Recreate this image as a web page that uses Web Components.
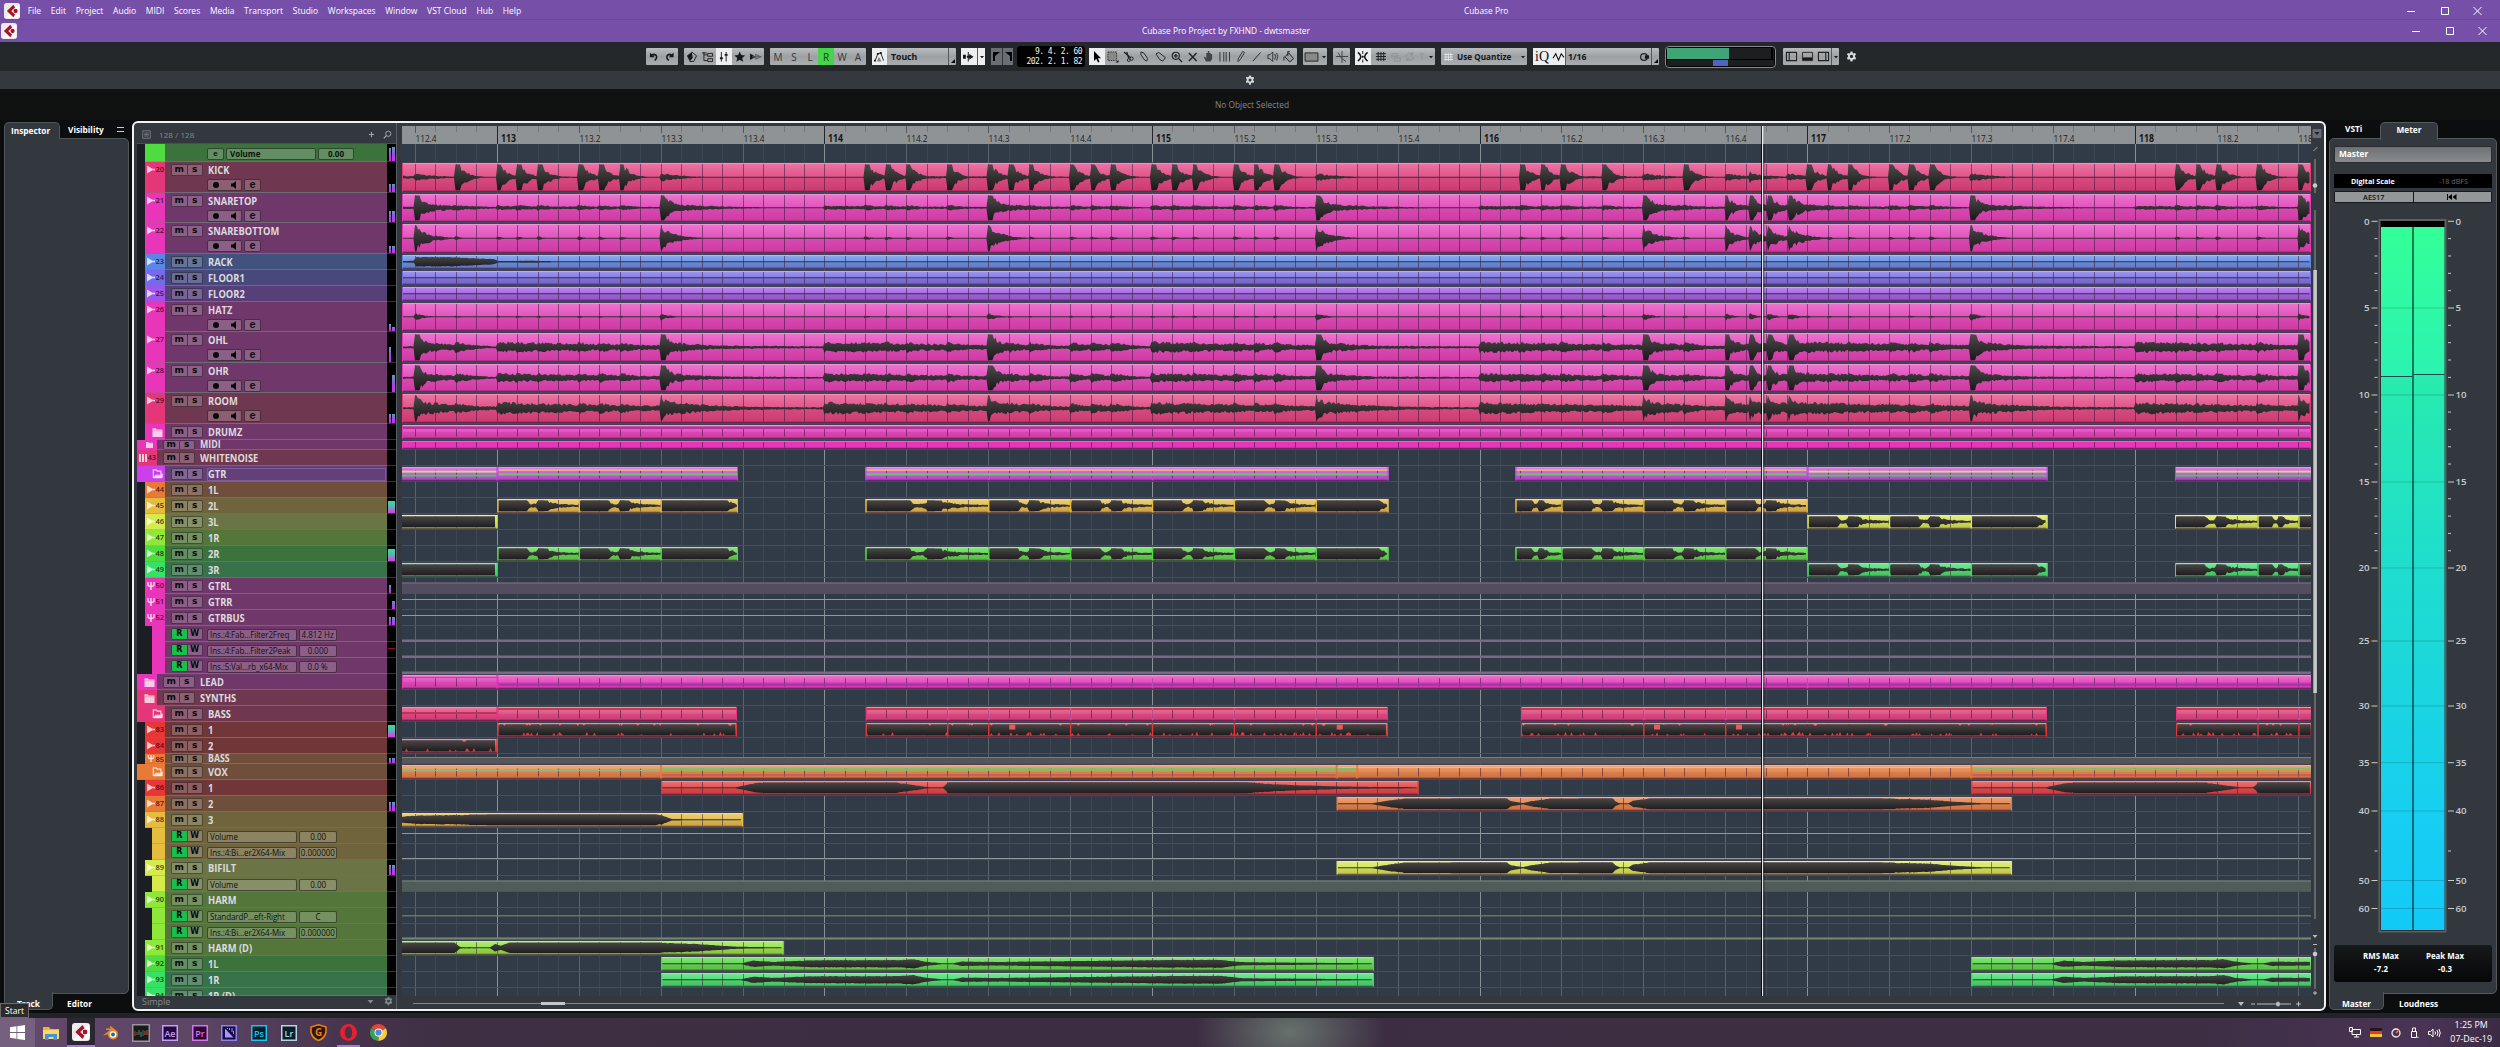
<!DOCTYPE html>
<html lang="en">
<head>
<meta charset="utf-8">
<title>Cubase Pro Project by FXHND - dwtsmaster</title>
<style>
    html, body { margin: 0; padding: 0; }
    body {
        width: 2500px;
        height: 1047px;
        overflow: hidden;
        background: #0c0d0e;
        font-family: "Open Sans", "Noto Sans", sans-serif;
        font-size: 9px;
        line-height: 1;
        color: #fff;
    }
    main {
        display: flex;
        align-items: flex-start;
        height: 898px;
        padding: 1px 0 0 4px;
        box-sizing: border-box;
        background: linear-gradient(#0c0d0e 893px, #212427 893px);
    }
</style>
</head>
<body>
<daw-titlebar></daw-titlebar>
<daw-toolbar></daw-toolbar>
<info-line>No Object Selected</info-line>
<main>
    <inspector-panel></inspector-panel>
    <project-zone></project-zone>
    <meter-panel></meter-panel>
</main>
<task-bar></task-bar>

<script>
// ---------- shared data ----------
const BAR = 327.55;
const STEP = BAR / 16;
const BAR_113 = 497.4;
const LEFT = 402;
const RIGHT = 2311;
const PLAYHEAD = 1762;
const at = n => BAR_113 + n * STEP;

// strip colour, body colour
const C = {
    rose: ['#e6367a', '#703850'],
    pink: ['#e835ba', '#70386a'],
    blue: ['#5a86ea', '#42527e'],
    indigo: ['#756aec', '#48487c'],
    violet: ['#9d55ea', '#573f7a'],
    purple: ['#cb40ea', '#644078'],
    orange: ['#e87a38', '#704e3c'],
    yellow: ['#e6bc3e', '#70643c'],
    lemon: ['#d6ea4a', '#6a7444'],
    lime: ['#8ee838', '#54763a'],
    green: ['#4edc3e', '#3c723c'],
    mint: ['#36e264', '#38724a'],
    red: ['#e63636', '#703638']
};

const hits = [-2, 0, 1, 2, 4, 5, 6, 18, 19, 20, 22, 24, 25, 26, 28, 29, 30, 32, 33, 34, 36, 37, 38,
    50, 51, 52, 54, 58, 64, 65, 66, 68, 69, 70, 82, 83, 84, 86, 88];
const snares = [-4, 8, 24, 40, 56, 60, 61.2, 62.1, 63.1, 72, 88];
const kickWave = hits.map(n => [n, 1.6, 8]).concat(
    [-4, 8, 40, 56, 60, 61.2, 63, 72].map(n => [n, .36, 22]), [[61.2, .5, 9]], [[-5, .16, 60], [0, .14, 90], [18, .16, 180], [50, .14, 150], [64, .12, 70], [82, .14, 80]]);
const big = (peak, decay) => snares.map(n => [n, peak, n > 59 && n < 63 ? decay * .75 : decay]);
const small = (peak, decay) => hits.map(n => [n, peak, decay]);
const beds = amp => [[-5, .1, 400], [0, amp, 190], [16, amp, 210], [32, amp, 190], [48, amp, 210], [64, amp, 190], [80, amp, 210]];

const full = (wave) => [{ a: LEFT, b: RIGHT, wave }];
const gtrSplits = [4, 8, 24, 28, 32, 36, 40, 52, 56, 60, 68, 72, 86, 88];
const bassSplits = [22, 24, 28, 32, 36, 40, 56, 60, 86, 88];
const gtrMain = [[at(0), 738], [865.5, 1388.5], [1515.5, at(64)]];
const gtrAlt = [[LEFT - 9, at(0)], [at(64), 2047.5], [2175, RIGHT + 9]];
const riff = ranges => ranges.map(([a, b]) => ({ a, b, riff: true, splits: gtrSplits }));

const voxA = [[0, .04], [73, .05], [95, .9], [108, .95], [235, .95], [262, .25], [268, .08], [282, .1], [287, 1], [585, 1], [610, .7], [640, .45], [690, .2], [757, .1]];
const voxB = [[0, .04], [35, .08], [55, .7], [68, .95], [170, 1], [174, .5], [186, .12], [195, .5], [212, .95], [276, 1], [279, .4], [283, .1], [292, .08], [296, .6], [313, 1], [540, 1], [590, .8], [620, .35], [650, .06], [675, .05]];
const harm = [[0, .04], [80, .08], [92, .6], [100, .5], [112, .35], [150, .65], [240, .7], [252, .9], [264, .4], [280, .1], [292, .08], [300, .4], [340, .35], [500, .7], [560, .75], [580, .3], [714, .08]];

const pinkCurve = [{ y: 13.5, h: 2.5, c: '#7c6884' }];
const TRACKS = [
    { first: true, c: 'green', h: 18, m: [13, 14] },
    { n: 20, name: 'KICK', c: 'rose', h: 31, m: [8, 8], clips: full(kickWave) },
    { n: 21, name: 'SNARETOP', c: 'pink', h: 30, m: [11, 11], clips: full(big(1.3, 12).concat(big(.45, 50), small(.26, 20), beds(.18))) },
    { n: 22, name: 'SNAREBOTTOM', c: 'pink', h: 31, m: [7, 7], clips: full(big(1, 14).concat(small(.16, 6))) },
    { n: 23, name: 'RACK', c: 'blue', h: 16, clips: [{ a: LEFT, b: RIGHT, pts: [[0, .15], [12, .2], [14, .9], [50, .85], [92, .5], [96, .12], [130, .2], [165, .04], [1909, .02]] }] },
    { n: 24, name: 'FLOOR1', c: 'indigo', h: 16, clips: full([]) },
    { n: 25, name: 'FLOOR2', c: 'violet', h: 16, clips: full([]) },
    { n: 26, name: 'HATZ', c: 'pink', h: 30, m: [7, 4], clips: full(big(.32, 9).concat(small(.1, 6))) },
    { n: 27, name: 'OHL', c: 'pink', h: 31, m: [15, 0], clips: full(big(1.5, 10).concat(big(.6, 42), small(.46, 24), beds(.48))) },
    { n: 28, name: 'OHR', c: 'pink', h: 30, m: [0, 17], clips: full(big(1.5, 10).concat(big(.55, 40), small(.44, 22), beds(.4))) },
    { n: 29, name: 'ROOM', c: 'rose', h: 31, m: [9, 9], clips: full(big(1, 14).concat(big(.65, 58), small(.46, 26), beds(.52))) },
    { name: 'DRUMZ', c: 'pink', h: 16, icon: 'folder', clips: [{ a: LEFT, b: RIGHT, stripes: [[2.5, 2.5, '#b43295']] }] },
    { name: 'MIDI', c: 'pink', h: 10, lvl: 0, icon: 'folder', clips: [{ a: LEFT, b: RIGHT, flat: true }] },
    { n: 43, name: 'WHITENOISE', c: 'rose', h: 16, lvl: 0, icon: 'keys' },
    { name: 'GTR', c: 'purple', h: 16, icon: 'open', wide: true, selected: true, clips:
        gtrMain.map(([a, b]) => ({ a, b, splits: [24, 28, 32, 36, 40, 60], stripes: [[3.2, 1.6, '#e8c258'], [7.2, 2.4, '#69c566']] })).concat(
        gtrAlt.map(([a, b]) => ({ a, b, splits: [88], stripes: [[4.6, 2, '#dcd27c'], [8.6, 2, '#4cc86c']] }))) },
    { n: 44, name: '1L', c: 'orange', h: 16 },
    { n: 45, name: '2L', c: 'yellow', h: 16, m: 12, clips: riff(gtrMain) },
    { n: 46, name: '3L', c: 'lemon', h: 16, clips: riff(gtrAlt) },
    { n: 47, name: '1R', c: 'lime', h: 16 },
    { n: 48, name: '2R', c: 'green', h: 16, m: 12, clips: riff(gtrMain) },
    { n: 49, name: '3R', c: 'mint', h: 16, clips: riff(gtrAlt) },
    { n: 50, name: 'GTRL', c: 'pink', h: 16, icon: 'fader', m: [8, 0], curves: [{ y: 4.5, h: 11, c: '#524e60' }, { y: 4.5, h: 1, c: '#836c86' }] },
    { n: 51, name: 'GTRR', c: 'pink', h: 16, icon: 'fader', m: [0, 8], curves: [{ y: 5, h: 1, c: '#92989b' }] },
    { n: 52, name: 'GTRBUS', c: 'pink', h: 16, icon: 'fader', m: [8, 8], curves: [{ y: 5, h: 1, c: '#92989b' }] },
    { auto: 'Ins.:4:Fab...Filter2Freq', val: '4.812 Hz', c: 'pink', h: 16, curves: pinkCurve },
    { auto: 'Ins.:4:Fab...Filter2Peak', val: '0.000', c: 'pink', h: 16, clip: true, curves: pinkCurve },
    { auto: 'Ins.:5:Val...rb_x64-Mix', val: '0.0 %', c: 'pink', h: 16, curves: pinkCurve },
    { name: 'LEAD', c: 'pink', h: 16, lvl: 0, icon: 'folder', clips: [
        { a: LEFT, b: at(0), stripes: [[3, 1, '#c63fb0']] }, { a: at(0), b: RIGHT + 9, splits: [32, 64], stripes: [[9.5, 2.2, '#a82eb2']] }] },
    { name: 'SYNTHS', c: 'rose', h: 16, lvl: 0, icon: 'folder' },
    { name: 'BASS', c: 'rose', h: 16, icon: 'open', wide: true, clips: [
        { a: LEFT - 9, b: at(0), stripes: [[6, 2, '#c23350']] },
        ...[[at(0), 737], [at(18), 1388], [at(50), 2047], [at(82), RIGHT + 9]].map(([a, b]) => ({ a, b, splits: bassSplits, stripes: [[2, 2, '#c63c44']] }))] },
    { n: 83, name: '1', c: 'red', h: 16, m: 12, clips: [[at(0), 737], [at(18), 1388], [at(50), 2047], [at(82), RIGHT + 9]].map(([a, b]) => ({ a, b, bass: true, splits: bassSplits })) },
    { n: 84, name: '2', c: 'red', h: 16, clips: [{ a: LEFT - 9, b: at(0), bass: true }] },
    { n: 85, name: 'BASS', c: 'orange', h: 10, icon: 'fader', m: [5, 5], curves: [{ y: 3, h: 6.5, c: '#565559' }, { y: 3, h: 1, c: '#84797b' }] },
    { name: 'VOX', c: 'orange', h: 16, icon: 'open', wide: true, clips: [
        { a: LEFT - 9, b: at(8), stripes: [[3, 1.5, '#d8b45c'], [6, 1, '#9fae84']] },
        { a: at(8), b: at(41), stripes: [[4.2, 2.4, '#74c46a'], [10.5, 1, '#c8466a']] },
        { a: at(41), b: at(42), stripes: [[3, 1, '#d8cc5c'], [4.2, 2.4, '#74c46a']] },
        { a: at(42), b: at(72), stripes: [[3, 1, '#d8cc5c']] },
        { a: at(72), b: RIGHT + 9, stripes: [[4.2, 2, '#74c46a'], [10.5, 1, '#c8466a']] }] },
    { n: 86, name: '1', c: 'red', h: 16, clips: [{ a: at(8), b: 1418.5, pts: voxA }, { a: at(72), b: RIGHT + 400, pts: voxA }] },
    { n: 87, name: '2', c: 'orange', h: 16, m: [9, 9], clips: [{ a: at(41), b: 2012, pts: voxB }] },
    { n: 88, name: '3', c: 'yellow', h: 16, clips: [{ a: LEFT - 5, b: 743, pts: [[0, .5], [20, .8], [60, .9], [100, 1], [258, 1], [265, .85], [275, .15], [300, .06], [346, .04]] }] },
    { auto: 'Volume', val: '0.00', c: 'yellow', h: 16, curves: [{ y: 5, h: 1, c: '#92989b' }] },
    { auto: 'Ins.:4:Bi...er2X64-Mix', val: '0.000000', c: 'yellow', h: 16, curves: [{ y: 14, h: 1, c: '#92989b' }] },
    { n: 89, name: 'BIFILT', c: 'lemon', h: 16, m: [10, 10], clips: [{ a: at(41), b: 2012, pts: voxB }] },
    { auto: 'Volume', val: '0.00', c: 'lemon', h: 16, curves: [{ y: 4.5, h: 11, c: '#505c59' }, { y: 4.5, h: 1, c: '#7a8779' }] },
    { n: 90, name: 'HARM', c: 'lime', h: 16 },
    { auto: 'StandardP...eft-Right', val: 'C', c: 'lime', h: 16, curves: [{ y: 7.2, h: 1.2, c: '#71866d' }] },
    { auto: 'Ins.:4:Bi...er2X64-Mix', val: '0.000000', c: 'lime', h: 16, curves: [{ y: 13.4, h: 2, c: '#71866d' }] },
    { n: 91, name: 'HARM (D)', c: 'lime', h: 16, clips: [{ a: LEFT - 5, b: 783.5, pts: [[0, .95], [58, .95], [63, .12], [93, .1], [98, .7], [104, .4], [112, .95], [260, .95], [300, .7], [340, .2], [386, .06]] }] },
    { n: 92, name: '1L', c: 'green', h: 16, clips: [{ a: at(8), b: 1374, pts: harm }, { a: at(72), b: RIGHT + 400, pts: harm }] },
    { n: 93, name: '1R', c: 'mint', h: 16, clips: [{ a: at(8), b: 1374, pts: harm }, { a: at(72), b: RIGHT + 400, pts: harm }] },
    { n: 94, name: '1R (D)', c: 'mint', h: 8 }
];

// ---------- icons ----------
const ICONS = {
    gear: '<path fill-rule="evenodd" d="M5 0h2l.4 1.6 1 .5L10 1.500l1 1.700-1.200 1.200v1.200L11 7.200 10 9l-1.600-.5-1 .5L7 11H5l-.4-2-1-.5L2 9 1 7.200l1.200-1.400V4.400L1 3.200 2 1.500l1.600.6 1-.5zM6 3.600a1.800 1.800 0 1 0 0 3.600 1.800 1.800 0 0 0 0-3.600z"/>',
    undo: '<path d="M2 1.500v5h5L5.300 4.800c3-1 4.200 2 1.200 4.200l1 1.500C12.500 6.500 8.500.8 3.800 3.300z"/>',
    redo: '<path d="M10 1.500v5H5l1.700-1.700c-3-1-4.200 2-1.200 4.200l-1 1.500C-.5 6.500 3.500.8 8.200 3.300z"/>',
    tag: '<path d="M6 1 1 5l3 6 3-4z"/><path d="M6 1l5 4-3 6H4" fill="none" stroke="#222"/>',
    tree: '<path d="M2 1v9h4M2 4h4M6 2.500h5v3H6zM6 8h5v3H6zM0 2h5" fill="none" stroke="#222"/>',
    sliders: '<path d="M3.500 1v10M8.500 1v10" stroke="#222"/><path d="M2 6.500h3v2H2zM7 3h3v2H7z"/>',
    star: '<path d="m6 .5 1.600 3.700 4 .4-3 2.700.9 4L6 9.200 2.500 11.300l.9-4-3-2.700 4-.4z"/>',
    skip: '<path d="M0 2.500v7L6 6z"/><path d="M6 3.500v5L11 6zM2 6h10" fill="none" stroke="#555"/>',
    auto: '<path d="M1 10.500 4 3l3-1 3 8" fill="none" stroke="#222"/><path d="M3 2h2v2H3zM6 1h2v2H6zM0 9h2v2H0z"/><path d="M5 6l3 5H3z" fill="#888"/>',
    scroll: '<path d="M0 4h3v4H0zM5 1h1v10H5zM4 1h3M6.500 3 11 6 6.500 9zM4 5h5v2H4z"/>',
    arrow: '<path d="M3 0v10l2.300-2.200L7 11.500l1.500-.7-1.600-3.600H10z"/>',
    range: '<path d="M1 1h9v9H1z" fill="#888" stroke="#333" stroke-dasharray="1.500 1"/><path d="M12 12H9l3-3z"/>',
    scissors: '<path d="m1 1 7 6M4 1l2 7" stroke="#222" stroke-width="1.300"/><circle cx="9" cy="8" r="1.700" fill="none" stroke="#222"/><circle cx="6" cy="9.500" r="1.500" fill="none" stroke="#222"/>',
    glue: '<path d="m2 1 3 1 4 6-1 2.500L6 9.500 2 4z" fill="#aaa" stroke="#222"/>',
    erase: '<path d="m1 3 3-1.500L11 7 8 10.500 5 9z" fill="none" stroke="#222"/>',
    zoom: '<circle cx="5" cy="5" r="3.700" fill="none" stroke="#222" stroke-width="1.200"/><path d="m8 8 3.500 3.500M3 5h4M5 3v4" stroke="#222" stroke-width="1.300"/>',
    mute: '<path d="m2 2 8 8.500M10 2 2 10.500" stroke="#222" stroke-width="1.500"/>',
    hand: '<path d="M3 11 1 6.500l1-.5 1.500 1.500V2H5V0h1.500v2H8v1h1.500v5L8 11z" fill="#444"/>',
    warp: '<path d="M1 1v10M5 1v10M7.500 1v10M11 1v10" stroke="#333"/>',
    pencil: '<path d="m3 11 .5-3L8 .5l2 1L5.500 9z" fill="none" stroke="#333"/>',
    line: '<path d="m2 10.500 8-9" stroke="#222"/>',
    play: '<path d="M1 4h2l3-3v10L3 8H1z" fill="none" stroke="#333"/><path d="M8 3q2 3 0 6M10 2q2.500 4 0 8" fill="none" stroke="#333"/>',
    bucket: '<path d="m2 6 4-4 5 6-4 3.500zM5 5V.5h2" fill="#999" stroke="#222"/><path d="M1 6v4"  stroke="#222"/>',
    frame: '<path d="M-1 1.500h14v9H-1z" fill="#888" stroke="#222"/>',
    cross: '<path d="M0 5.500h12M6 0v12M2 1.500q3 7 8 9" fill="none" stroke="#444"/>',
    snap: '<path d="M6 0v3M6 9v3" stroke="#111"/><path d="M1 1.500q6 4.500 0 9M11 1.500q-6 4.500 0 9" fill="none" stroke="#111" stroke-width="1.600"/><path d="M5 5h2v2H5z"/>',
    grid: '<path d="M3.500 1v10M6.500 1v10M9.500 1v10M1 3h11M1 6h11M1 9h11" stroke="currentColor" fill="none"/>',
    ghost: '<path d="M1 2h7v3H1zM4 7h7v4H4z" fill="none" stroke="#8b8f92"/>',
    loop: '<path d="M2 6a4 4 0 0 1 7-2.500M10 6a4 4 0 0 1-7 2.500M9 1v3H6M3 11V8h3" fill="none" stroke="#8b8f92"/>',
    tee: '<path d="M2 2h8M6 2v9" stroke="#8b8f92"/>',
    caret: '<path d="M2 4h8L6 8.500z"/>',
    wave: '<path d="M0 8 3 3l3 7 3-7 3 4" fill="none" stroke="#111" stroke-width="1.200"/>',
    swing: '<circle cx="6" cy="6" r="4" fill="none" stroke="#222" stroke-width="1.500"/><path d="M7 4h5v4H7z"/>',
    zoneL: '<path d="M.5 1.500h11v9H.5zM3.500 1v10" fill="none" stroke="#222" stroke-width="1.200"/>',
    zoneB: '<path d="M.5 1.500h11v9H.5z" fill="none" stroke="#222"/><path d="M1 7h10v3H1z"/>',
    zoneR: '<path d="M.5 1.500h11v9H.5zM8.500 1v10" fill="none" stroke="#222" stroke-width="1.200"/>',
    search: '<circle cx="7" cy="5" r="3.500" fill="none" stroke="currentColor" stroke-width="1.300"/><path d="M4.500 7.500 1 11" stroke="currentColor" stroke-width="1.600"/>',
    plus: '<path d="M6 1.500v9M1.500 6h9" stroke="currentColor" stroke-width="2"/>',
    list: '<path d="M1 1h10v10H1zM3 4h6M3 6h6M3 8h6" fill="none" stroke="currentColor"/>',
    audio: '<path d="M0 0v12L8 7.200h4V5H8z"/>',
    folder: '<path d="M0 3V1.500h4L5 3h7v9H0z"/><path d="M0 4.500h12" stroke="#c44" stroke-width=".7" opacity=".5"/>',
    open: '<path d="M1 10V1h3.500l1 1.500H10V6h1.500v4z" fill="none" stroke="currentColor" stroke-width="1.400"/><path d="M1 11l2.500-4H12l-1 4z"/>',
    keys: '<path d="M0 0h3v12H0zM4.500 0h3v12h-3zM9 0h3v12H9z"/>',
    fader: '<path d="M1.500 0v4q0 2.500 4.500 2.500T10.500 4V0M6 0v12" fill="none" stroke="currentColor" stroke-width="2.300"/>'
};
const icon = (name, w = 11.5, h = 11.5, color = '#16181a') =>
    `<svg class="icon" width="${w}" height="${h}" viewBox="0 0 12 12" fill="currentColor" style="color:${color};overflow:visible;display:block;flex:none">${ICONS[name]}</svg>`;

const cubase = (s) => `<svg width="${s}" height="${s}" viewBox="0 0 18 18" style="display:block;flex:none">
    <rect width="18" height="18" rx="3" fill="#eceaea"/>
    <path d="M1 17 17 1v13a3 3 0 0 1-3 3z" fill="#fff"/>
    <path d="M10.500 2 3.300 9l7.200 7 2-3.200L8.200 9l4.300-3.800z" fill="#a5122a"/>
    <circle cx="13" cy="9" r="2.400" fill="#a5122a"/></svg>`;

function define(name, markup, setup) {
    const template = document.createElement('template');
    customElements.define(name, class extends HTMLElement {
        constructor() {
            super();
            this.attachShadow({ mode: 'open' });
        }

        connectedCallback() {
            template.innerHTML = typeof markup === 'function' ? markup(this) : markup;
            this.shadowRoot.replaceChildren(template.content.cloneNode(true));
            if (setup) setup(this.shadowRoot, this);
        }
    });
}

// ---------- title bars ----------
const winButtons = `<svg width="78" height="10" viewBox="0 0 78 10" fill="none" stroke="#fff"><path d="M1 5.500h8M35.500 1.500h7v7h-7zM67.500 1l8 8M75.500 1l-8 8"/></svg>`;
define('daw-titlebar', `
<style>
    :host { display: block; background: #764fa9; }
    .bar { display: grid; align-items: center; box-sizing: border-box; }
    .menu { height: 20px; padding: 3px 16px 0 4px; border-bottom: 1px solid #6c479c; grid-template-columns: 1460px auto 1fr; }
    .window { height: 22px; padding: 0 11px 0 1px; grid-template-columns: 1141px auto 1fr; }
    nav { display: flex; align-items: center; gap: 9.700px; font-size: 8.500px; line-height: 12px; }
    nav svg { margin-right: -2px; }
    .controls { justify-self: end; }
    .bar > span { font-size: 8.350px; line-height: 12px; white-space: nowrap; }
</style>
<div class="bar menu">
    <nav>${cubase(16)}${['File', 'Edit', 'Project', 'Audio', 'MIDI', 'Scores', 'Media', 'Transport', 'Studio', 'Workspaces', 'Window', 'VST Cloud', 'Hub', 'Help'].map(t => `<span>${t}</span>`).join('')}</nav>
    <span>Cubase Pro</span>
    <div class="controls">${winButtons}</div>
</div>
<div class="bar window">
    ${cubase(16)}
    <span>Cubase Pro Project by FXHND - dwtsmaster</span>
    <div class="controls">${winButtons}</div>
</div>`);

// ---------- toolbar ----------
define('tool-group', `
<style>
    :host {
        display: flex; align-items: center; height: 17px; box-sizing: border-box; border-radius: 1px;
        background: linear-gradient(#b9bdc0, #9da1a4 50%, #a9adb0); color: #2a2d30;
    }
</style>
<slot></slot>`);

const cell = (content, cls = '', w = 16) => `<span class="cell ${cls}" style="width:${w}px">${content}</span>`;
define('daw-toolbar', `
<style>
    :host { display: block; }
    .tools { display: flex; align-items: center; height: 29px; padding-left: 646px; background: #24282a; }
    .tools > * { flex: none; margin-right: 6px; }
    .cell { display: flex; align-items: center; justify-content: center; height: 17px; font-size: 10px; color: #33373a; flex: none; }
    .on { background: #eceeef; }
    .green { background: #46d44a; color: #114411; }
    .side { border-left: 1px solid #55595c; box-sizing: border-box; }
    .label { font-weight: 700; font-size: 8.700px; line-height: 12px; color: #141618; padding-left: 4px; flex: 1; white-space: nowrap; }
    .dim { background: #6a6e76; }
    .dim + .dim { border-left: 1px solid #33373c; box-sizing: border-box; }
    .time { width: 65px; height: 21px; padding-right: 3px; border-radius: 3px; background: #000; display: flex; flex-direction: column;
        justify-content: center; gap: 1px; text-align: right; font: 8px/9px "DejaVu Sans Mono", monospace; letter-spacing: -.55px; white-space: pre; color: #f2f4f6; }
    .iq { font: 14px "Liberation Serif", serif; color: #111; }
    .perf { width: 107px; height: 18px; padding: 1px; border: 1px solid #85898b; border-radius: 4px; background: #000; display: flex; flex-direction: column; gap: 1px; }
    .perf div { height: 11px; background: linear-gradient(90deg, #3fa577 62px, #1c1e1f 62px 104px, #000 104px 106px, #1c1e1f 106px); }
    .perf div + div { height: 6px; background: linear-gradient(90deg, #1c1e1f 46px, #4f63c4 46px 61px, #1c1e1f 61px); }
    .strip { height: 18px; background: #35393e; display: flex; align-items: center; justify-content: center; }
</style>
<div class="tools">
    <tool-group>${cell(icon('undo'))}${cell(icon('redo'))}</tool-group>
    <tool-group>${cell(icon('tag'))}${cell(icon('tree'))}${cell(icon('sliders'), 'on')}${cell(icon('star'))}${cell(icon('skip'))}</tool-group>
    <tool-group>${cell('M')}${cell('S')}${cell('L')}${cell('R', 'green')}${cell('W')}${cell('A')}</tool-group>
    <tool-group style="width:84px;margin-right:5px">${cell(icon('auto'), 'on', 15)}<span class="label">Touch</span>${cell('<svg width="4" height="4" style="margin:9px 0 0 1px"><path d="M4 0v4H0z"/></svg>', 'side', 8)}</tool-group>
    <tool-group>${cell(icon('scroll'), 'on')}${cell(icon('caret', 6, 6), 'side on', 8)}</tool-group>
    <tool-group style="margin-right:4px;width:22px">${cell('<svg width="7" height="9"><path d="M0 0h7L2 4v5H0z"/></svg>', 'dim', 11)}${cell('<svg width="7" height="9"><path d="M7 0H0l5 4v5h2z"/></svg>', 'dim', 11)}</tool-group>
    <div class="time" style="margin-right:4px"><span>9. 4. 2. 60</span><span>202. 2. 1. 82</span></div>
    <tool-group>${cell(icon('arrow', 12, 12, '#000'), 'on')}${['range', 'scissors', 'glue', 'erase', 'zoom', 'mute', 'hand', 'warp', 'pencil', 'line', 'play', 'bucket'].map(n => cell(icon(n))).join('')}</tool-group>
    <tool-group>${cell(icon('frame', 11, 12), '', 17)}${cell(icon('caret', 6, 6), '', 7)}</tool-group>
    <tool-group style="margin-right:5px">${cell(icon('cross', 12, 12), '', 17)}</tool-group>
    <tool-group>${cell(icon('snap'), 'on')}${cell(icon('grid', 11, 11), '', 18)}${cell(icon('ghost', 10, 10), '', 13)}${cell(icon('loop'), '', 15)}${cell(icon('tee', 8, 11), '', 10)}${cell(icon('caret', 6, 6), '', 8)}</tool-group>
    <tool-group style="width:86px">${cell(icon('grid', 10, 10, '#e4e6e8'), '', 13)}<span class="label" style="padding-left:3px;font-size:8.200px">Use Quantize</span>${cell(icon('caret', 6, 6), '', 9)}</tool-group>
    <tool-group style="width:126px">${cell('<span class="iq">iQ</span>', 'on', 18)}${cell(icon('wave', 11, 11), 'on', 14)}<span class="side" style="height:17px"></span><span class="label" style="padding-left:2px">1/16</span>${cell(icon('swing', 10, 10), '', 14)}${cell('<svg width="4" height="4" style="margin:9px 0 0 1px"><path d="M4 0v4H0z"/></svg>', 'side', 8)}</tool-group>
    <div class="perf" style="margin-right:7px"><div></div><div></div></div>
    <tool-group style="margin-right:7px">${cell(icon('zoneL', 11, 11))}${cell(icon('zoneB', 11, 11))}${cell(icon('zoneR', 11, 11))}${cell(icon('caret', 6, 6), 'side', 8)}</tool-group>
    ${icon('gear', 11, 12, '#d6d8da')}
</div>
<div class="strip">${icon('gear', 10, 11, '#d6d8da')}</div>`);

define('info-line', `
<style>
    :host { display: flex; align-items: center; justify-content: center; height: 31px; padding: 1px 0 0 4px; box-sizing: border-box; background: #101111; color: #85898c; font-size: 8.400px; }
</style>
<slot></slot>`);

// ---------- left zone ----------
define('inspector-panel', `
<style>
    :host { display: flex; flex-direction: column; width: 125px; height: 890px; flex: none; font-weight: 700; font-size: 8.300px; }
    .tabs { display: flex; align-items: center; height: 17px; }
    .tabs > * { box-sizing: border-box; }
    .tab { width: 56px; height: 17px; padding: 4px 0 0 6px; border: 1.500px solid #505559; border-bottom: 0; border-radius: 5px 5px 0 0; background: #33383f; margin-bottom: -2px; z-index: 1; position: relative; }
    .other { padding-left: 8px; flex: 1; padding-top: 1px; }
    .lines { width: 7px; height: 5px; border: solid #ccc; border-width: 1.500px 0; margin-right: 5px; }
    .panel { flex: 1; border: 1.500px solid #505559; border-radius: 0 5px 5px 0; background: #33383f; }
    .bottom .tab { width: 49px; height: 18px; margin: -3px 0 0; border: 1.500px solid #505559; border-top: 0; border-radius: 0 0 5px 5px; padding: 8px 0 0 12px; }
    .bottom .other { padding-left: 14px; padding-top: 4px; }
</style>
<div class="tabs"><span class="tab">Inspector</span><span class="other">Visibility</span><span class="lines"></span></div>
<div class="panel"></div>
<div class="tabs bottom"><span class="tab">Track</span><span class="other">Editor</span></div>`);

// ---------- track list ----------
define('track-row', el => {
    const t = TRACKS[el.getAttribute('index')];
    const [strip, body] = C[t.c];
    const inset = t.lvl === 0 ? 0 : t.wide ? 0 : t.auto ? 15 : 8;
    const stripW = t.lvl === 0 ? 20 : 28 - inset;
    const tall = t.h > 20;
    const short = t.h === 10;
    const isFolder = t.icon === 'folder' || t.icon === 'open';
    const ms = t.auto || t.first ? '' : `<span class="pair"><b>m</b><b>s</b></span><span class="name ${t.selected ? 'selected' : ''}"><span>${t.name}</span></span>`;
    const autoRow = t.auto ? `<span class="pair auto"><b class="read">R</b><b>W</b></span><span class="box param"><span>${t.auto}</span></span><span class="box value"><span>${t.val}</span></span>` : '';
    const meter = Array.isArray(t.m) ? t.m.map(v => `<i style="height:${v}px"></i>`).join('') : t.m ? `<i class="wide" style="height:${t.m}px"></i>` : '';
    const glyph = t.first || t.auto ? '' : icon(t.icon || 'audio', isFolder ? 11 : 8, short ? 7 : t.icon ? 10 : 9, 'rgba(255,255,255,.75)');
    return `
<style>
    :host { display: flex; height: ${t.h}px; padding-left: ${inset}px; box-sizing: border-box; overflow: hidden; background: #1b1f23; }
    .strip { width: ${stripW}px; background: ${strip}; border-bottom: 1px solid color-mix(in srgb, ${strip} 70%, #777); box-sizing: border-box;
        display: flex; justify-content: ${isFolder ? 'flex-end' : 'flex-start'}; padding: ${short ? 1 : 3}px 0 0 2px; gap: .5px; flex: none; }
    ${isFolder ? '.strip { padding-right: 2px; }' : ''}
    .strip span { font: 600 7.500px/${short ? 8 : 9}px "Open Sans", sans-serif; color: rgba(40,15,25,.85); }
    .body { flex: 1; background: ${body}; border-bottom: 1px solid #6b6f75; box-sizing: border-box; padding: ${t.first ? 3 : short ? 0 : 2}px 0 0 6px; }
    .line { display: flex; align-items: center; height: ${short ? 9 : 12}px; }
    .name { font: 700 ${short ? '10px/9px' : '10.600px/12px'} "Open Sans", sans-serif; color: #dcdade; margin-left: 5px; flex: 1; white-space: nowrap; }
    .name span { display: inline-block; transform: scaleX(.88); transform-origin: left; }
    .selected { border: 1px solid rgba(140,110,170,.6); height: 11px; line-height: 10px; margin-left: 4px; margin-right: 1px; }
    .pair { display: flex; border: 1px solid rgba(0,0,0,.45); border-radius: 2px; background: rgba(255,255,255,.2); height: ${short ? 8 : 10}px; }
    .pair b { width: 14.500px; text-align: center; font: bold 9px/${short ? 7 : 9}px "DejaVu Sans", sans-serif; color: #08080a; }
    .pair b + b { border-left: 1px solid rgba(0,0,0,.45); }
    .pair.auto b { font-size: 8px; line-height: 10px; }
    .read { background: #16c04c; }
    .sub { display: flex; gap: 2px; margin: 3px 0 0 36px; }
    .box { box-sizing: border-box; height: 12px; border: 1px solid rgba(0,0,0,.5); border-radius: 2px; background: rgba(255,255,255,.2); font: 9.300px/10px "Open Sans", sans-serif; color: #101012; white-space: nowrap; }
    .box > span { display: inline-block; transform: scaleX(.86); transform-origin: left; flex: none; }
    .param { width: 90px; margin: 1px 2px 0 4px; padding-left: 2px; letter-spacing: -.12px; }
    .value { width: 38px; margin-top: 1px; display: flex; justify-content: center; }
    .value > span { transform-origin: center; }
    .rec { width: 35px; display: flex; align-items: center; justify-content: space-between; padding: 0 5px; }
    .rec i { width: 6px; height: 6px; border-radius: 50%; background: #08080a; }
    .box.e { width: 17px; text-align: center; font: bold 11px/9px "Liberation Sans", sans-serif; }
    .meter { width: 9px; background: #000; border-bottom: 1px solid #333; box-sizing: border-box; display: flex; align-items: flex-end; justify-content: center; gap: 1px; flex: none; }
    .meter i { width: 2.500px; background: linear-gradient(#5ba0b0, #9a50dc 50%, #d52bee); }
    .meter .wide { width: 6.500px; background: linear-gradient(#25e59c, #6aa8b8 50%, #e038ee); }
    .meter hr { width: 7px; height: 1px; border: 0; margin: 0 0 8px; background: #90101c; }
    .first .box { color: #0a140a; font-weight: 700; font-size: 8px; }
</style>
<div class="strip">${glyph}${t.n ? `<span>${t.n}</span>` : ''}</div>
<div class="body ${t.first ? 'first' : ''}">
    ${t.first ? '<div class="sub" style="margin-top:1px"><span class="box e">e</span><span class="box" style="width:90px;padding-left:3px">Volume</span><span class="box" style="width:36px;text-align:center">0.00</span></div>' : `<div class="line">${ms}${autoRow}</div>`}
    ${tall ? '<div class="sub"><span class="box rec"><i></i><svg width="5" height="8"><path d="M0 2.500h2L5 0v8L2 5.500H0z"/></svg></span><span class="box e">e</span></div>' : ''}
</div>
<div class="meter">${meter}${t.clip ? '<hr>' : ''}</div>`;
});

// ---------- lanes ----------
function randomizer(seed) {
    let s = seed * 7919 + 17;
    return () => (s = (s * 16807) % 2147483647) / 2147483647;
}

function lerpPoints(pts, x) {
    for (let i = 1; i < pts.length; i++) {
        if (x <= pts[i][0]) {
            const [x0, y0] = pts[i - 1], [x1, y1] = pts[i];
            return y0 + (y1 - y0) * (x - x0) / (x1 - x0);
        }
    }
    return pts[pts.length - 1][1];
}

// palm-muted chord shape used inside each guitar segment, 0..1 across the segment
const RIFF = [[0, .9], [.02, 1], [.36, 1], [.42, .35], [.47, .5], [.5, 1], [.62, .95], [.7, .55], [.8, .35], [1, .2]];
const CHORD = [[0, 1], [.86, 1], [.93, .7], [1, .06]];

function envelope(clip, x) {
    if (clip.wave) {
        let v = .045;
        for (const [n, peak, decay] of clip.wave) {
            const d = x - at(n);
            if (d >= -1 && d < decay * 6) v = Math.max(v, peak * Math.exp(-Math.max(0, d) / decay));
        }
        return Math.min(1, v);
    }
    if (clip.pts) return lerpPoints(clip.pts, x - clip.a);
    if (clip.riff) {
        const edges = [clip.a, ...clip.splits.map(at).filter(s => s > clip.a + 2 && s < clip.b - 2), clip.b];
        const i = Math.max(0, edges.findIndex((e, k) => k < edges.length - 1 && x >= e && x < edges[k + 1]));
        if (clip.a < LEFT) return 1;
        const u = (x - edges[i]) / (edges[i + 1] - edges[i]);
        const last = i === edges.length - 2 && (clip.b < 1500 || clip.b > 2000);
        return lerpPoints(last ? CHORD : RIFF, u);
    }
    return 1;
}

function wavePath(clip, mid, half, rnd) {
    const top = [], bottom = [];
    const a = Math.max(LEFT, clip.a + 1), b = Math.min(RIGHT, clip.b - 1);
    for (let x = a; x <= b; x += 1.5) {
        const v = envelope(clip, x);
        let u = v, d = v;
        if (clip.bass) {
            u = rnd() < .07 ? .72 : 1;
            d = rnd() < .16 ? .35 + rnd() * .4 : 1;
        } else if (v < .93) {
            const rough = clip.pts ? .12 : clip.riff ? .55 : .48;
            u = v * (1 - rough * rnd());
            d = v * (1 - rough * rnd());
        } else if (clip.wave) {
            u = .97; d = 1;
        }
        top.push(`${x.toFixed(1)} ${(mid - Math.max(.4, u * half)).toFixed(1)}`);
        bottom.unshift(`${x.toFixed(1)} ${(mid + Math.max(.6, d * half)).toFixed(1)}`);
    }
    return `M${top.join('L')}L${bottom.join('L')}Z`;
}

function drawLane(t, index) {
    const h = t.h, rnd = randomizer(index + 3);
    const out = [];
    const rect = (x, y, w, hh, fill) => out.push(`<rect x="${x.toFixed(2)}" y="${y}" width="${Math.max(0, w).toFixed(2)}" height="${hh}" fill="${fill}"/>`);
    for (let n = -4; n <= 88; n++) {
        const x = Math.floor(at(n));
        rect(x, 0, 1, h, n % 16 === 0 ? '#8a9198' : n % 4 === 0 ? '#5b646d' : '#3c4752');
    }
    if (!t.first && index < TRACKS.length - 1) rect(LEFT, h - 1, RIGHT - LEFT, 1, '#45505b');
    (t.curves || []).forEach(c => rect(LEFT, c.y, RIGHT - LEFT, c.h, c.c));

    (t.clips || []).forEach(clip => {
        const col = C[t.c][0], eh = h - 2.5, a = Math.max(LEFT, clip.a), b = Math.min(RIGHT, clip.b);
        rect(a, 0, b - a, h - .5, 'rgba(66,66,88,.8)');
        rect(a, 1, b - a, eh, col);
        if (!clip.flat) rect(a, 1, b - a, eh, 'url(#soft)');
        rect(a, 1, b - a, 1, 'rgba(255,255,255,.22)');
        rect(a, h - 2.3, b - a, 1, 'rgba(40,0,40,.5)');
        for (let n = -4; n <= 88; n++) {
            const x = Math.floor(at(n));
            if (x > a + 2 && x < b - 2) rect(x, clip.stripes ? 4 : 2, 1, eh - (clip.stripes ? 5 : 2), 'rgba(45,15,50,.5)');
        }
        (clip.stripes || []).forEach(([y, sh, c]) => rect(a, y, b - a, sh, c));
        const wavy = clip.wave || clip.pts || clip.riff || clip.bass;
        if (wavy) out.push(`<path d="${wavePath(clip, 1 + eh / 2, eh / 2 - 1.2, rnd)}" fill="url(#ink)"/>`);
        if (clip.bass) for (const n of [25, 41, 56.5, 60.5]) if (at(n) > a && at(n) < b) rect(at(n), 2.5, 6, 5, '#e65c5c');
        const edges = (clip.splits || []).map(at).filter(x => x > a + 2 && x < b - 2);
        edges.forEach(x => rect(x - .7, 1, 1.4, eh, wavy ? col : 'rgba(255,130,240,.35)'));
        if (clip.a >= LEFT) rect(a, 1, 1, eh, col);
        if (clip.b <= RIGHT) rect(b - 1, 1, 1, eh, col);
    });
    rect(PLAYHEAD - 1, 0, 1, h, 'rgba(0,0,0,.8)');
    rect(PLAYHEAD, 0, 1.3, h, '#e6e6e8');
    rect(PLAYHEAD + 1.3, 0, 1, h, 'rgba(0,0,0,.6)');
    return `<svg width="1909" height="${h}" viewBox="402 0 1909 ${h}">
    <defs>
        <linearGradient id="soft" x1="0" y1="0" x2="0" y2="1"><stop offset="0" stop-color="#fff" stop-opacity=".32"/><stop offset=".5" stop-color="#ccc" stop-opacity=".2"/><stop offset=".52" stop-color="#999" stop-opacity=".2"/><stop offset="1" stop-color="#744" stop-opacity=".24"/></linearGradient>
        <linearGradient id="ink" gradientUnits="userSpaceOnUse" x1="0" y1="0" x2="0" y2="${h}"><stop offset="0" stop-color="#504e4e"/><stop offset="1" stop-color="#151214"/></linearGradient>
    </defs>${out.join('')}</svg>`;
}

define('track-lane', el => {
    const i = +el.getAttribute('index');
    return `<style>:host { display: block; height: ${TRACKS[i].h}px; background: #303b47; overflow: hidden; } svg { display: block; }</style>${drawLane(TRACKS[i], i)}`;
});

define('time-ruler', () => {
    let ticks = '';
    for (let n = -4; n <= 88; n++) {
        const x = Math.floor(at(n)) + .5;
        const bar = n % 16 === 0, beat = n % 4 === 0;
        ticks += `<path d="M${x} 0v${bar ? 18 : beat ? 7 : 6}" stroke="${bar ? '#22262a' : beat ? '#55595c' : '#74787b'}"/>`;
        if (bar) ticks += `<text x="${x + 3.5}" y="15.800" font-size="10" font-weight="700" textLength="15" lengthAdjust="spacingAndGlyphs" fill="#141618">${113 + n / 16}</text>`;
        else if (beat) ticks += `<text x="${x}" y="15.500" font-size="8.300" textLength="21" fill="#1c2023">${112 + Math.floor((n + 16) / 16)}.${((n + 16) % 16) / 4 + 1}</text>`;
    }
    return `<style>:host { display: block; height: 18px; background: #909395; overflow: hidden; } svg { display: block; font-family: "Open Sans", sans-serif; }</style>
    <svg width="1909" height="18" viewBox="402 0 1909 18">${ticks}<path d="M1761.500 0v18" stroke="#222"/><path d="M1762.600 0v18" stroke="#f0f0f0" stroke-width="1.300"/></svg>`;
});

// ---------- project zone ----------
define('project-zone', `
<style>
    :host { display: flex; width: 2190px; height: 886px; margin-left: 3px; flex: none; border: 2px solid #f2f2f2; border-radius: 6px; background: #33383f; overflow: hidden; color: #858a8e; }
    .list { width: 263px; padding: 3px 0 0 3px; display: flex; flex-direction: column; flex: none; box-sizing: border-box; border-right: 1px solid #5b6066; }
    .head { height: 17px; display: flex; align-items: center; padding: 0 4px 0 5px; border-bottom: 1px solid #4a4f54; flex: none; }
    .head span { margin-left: 8px; flex: 1; font-size: 8px; line-height: 12px; letter-spacing: .1px; }
    .head .icon + .icon { margin-left: 8px; }
    .rows { height: 852px; overflow: hidden; flex: none; }
    .foot { display: flex; align-items: center; height: 14px; padding: 0 3px 3px 5px; box-sizing: border-box; font-size: 9px; }
    .foot span { flex: 1; }
    .foot .icon { margin-left: 9px; }
    .arrange { width: 1909px; margin-left: 5px; padding-top: 3px; flex: none; }
    .scroll { display: flex; align-items: center; height: 15px; padding-left: 11px; }
    .bar { width: 1811px; height: 1px; background: #85898c; }
    .bar i { display: block; width: 24px; height: 3px; margin-left: 128px; background: #c5c8ca; transform: translateY(-1px); }
    .zoom { margin-left: 14px; }
    .lanes { height: 852px; overflow: hidden; }
    .right { flex: 1; }
    .right svg { display: block; }
</style>
<div class="list">
    <div class="head">${icon('list', 9, 9, '#858a8e')}<span>128 / 128</span>${icon('plus', 7, 7, '#a0a4a7')}${icon('search', 9, 9, '#a0a4a7')}</div>
    <div class="rows"></div>
    <div class="foot"><span>Simple</span>${icon('caret', 9, 9, '#858a8e')}${icon('gear', 9, 9, '#858a8e')}</div>
</div>
<div class="arrange">
    <time-ruler></time-ruler>
    <div class="lanes"></div>
    <div class="scroll"><div class="bar"><i></i></div>
        <svg class="zoom" width="64" height="8" viewBox="0 0 64 8" fill="#b8bcbf" stroke="none"><path d="M0 2h6L3 6zM13 3.500h4v1h-4zM19 3.500h34v1H19zM60 1.500h1v2h2v1h-2v2h-1v-2h-2v-1h2z"/><ellipse cx="40" cy="4" rx="2" ry="2.500"/></svg>
    </div>
</div>
<div class="right"><svg width="14" height="886" viewBox="2311 123 14 886">
    <rect x="2312.500" y="129" width="9" height="9" rx="1" fill="#666b74"/><path d="M2314.500 132h5l-2.500 3z" fill="#1b1e22"/>
    <path d="m2313.500 151 4-4" stroke="#aaa"/>
    <path d="M2315 159v34M2315 210v709M2315 948v41" stroke="#73777b" stroke-width="1.500"/>
    <circle cx="2315" cy="185.500" r="2.300" fill="#c8cacc"/>
    <rect x="2313.300" y="270" width="3.600" height="423" fill="#c5c8ca"/>
    <path d="M2312.500 935h5l-2.500 3zM2313 944h4v1h-4z" fill="#b8bcbf"/>
    <circle cx="2315" cy="954" r="2.300" fill="#c8cacc"/><path d="M2315 991v4M2313 993h4" stroke="#b8bcbf"/></svg></div>`,
(root) => {
    const rows = root.querySelector('.rows');
    const lanes = root.querySelector('.lanes');
    TRACKS.forEach((t, i) => {
        for (const [tag, parent] of [['track-row', rows], ['track-lane', lanes]]) {
            const node = document.createElement(tag);
            node.setAttribute('index', i);
            parent.appendChild(node);
        }
    });
});

// ---------- meter ----------
const MARKS = [[0, 221.3], [5, 308], [10, 395], [15, 482], [20, 568], [25, 641], [30, 706], [35, 762.7], [40, 811], [50, 880.5], [60, 908.5]];
function meterScale() {
    let s = '';
    MARKS.forEach(([v, y]) => {
        s += `<path d="M2372 ${y}h6M2448.500 ${y}h6" stroke="#c8cacc"/>
        <text x="2370" y="${y + 3.2}" text-anchor="end">${v}</text><text x="2456" y="${y + 3.2}">${v}</text>`;
        if (v) s += `<path d="M2381 ${y}h64" stroke="#000" stroke-opacity=".17"/>`;
    });
    for (let db = 1; db < 20; db++) {
        if (db % 5) {
            const y = 221.3 + db * 17.34;
            s += `<path d="M2375 ${y}h3M2448.500 ${y}h3" stroke="#c8cacc"/>`;
        }
    }
    return s + '<path d="M2375 851h3M2448.500 851h3" stroke="#c8cacc"/>';
}

define('meter-panel', `
<style>
    :host { display: flex; flex-direction: column; width: 168px; height: 890px; margin-left: 3px; flex: none; font-weight: 700; font-size: 8.300px; }
    .tabs { display: flex; height: 17px; align-items: center; }
    .tab { box-sizing: border-box; height: 18px; border: 1.500px solid #55595e; background: #33383f; text-align: center; position: relative; z-index: 1; }
    .top span:first-child { width: 51px; padding-left: 16px; box-sizing: border-box; }
    .top .tab { width: 58px; border-bottom: 0; border-radius: 5px 5px 0 0; padding-top: 3px; margin-bottom: -3px; }
    .panel { flex: 1; border: 1.500px solid #55595e; border-radius: 5px 5px 5px 0; background: #33383f; padding: 7px 4px 0 4px; display: flex; flex-direction: column; }
    .bottom .tab { width: 55px; margin-top: -4px; border-top: 0; border-radius: 0 0 5px 5px; padding-top: 8px; }
    .bottom { padding-top: 1px; box-sizing: border-box; }
    .bottom span + span { margin-left: 15px; padding-top: 3px; }
    .pick { height: 15px; line-height: 14px; border: 1px solid #2a2d30; border-radius: 2px; padding-left: 4px; background: linear-gradient(#6e7174, #898c8e); }
    .scale { display: flex; justify-content: space-between; margin-top: 11px; height: 14px; line-height: 14px; padding: 0 24px 0 17px; background: #000; font-size: 7.200px; }
    .scale span + span { color: #666b70; font-weight: 400; }
    .btns { display: flex; gap: 1px; margin-top: 3px; height: 10px; padding: 1px; background: #15181a; border-radius: 2px; font-size: 7.300px; line-height: 10px; color: #111; }
    .btns span { flex: 1; background: #94979a; font-weight: 600; display: flex; justify-content: center; align-items: center; }
    .vu { display: block; margin: 12px 0 0 -5.500px; font: 600 9.700px "Open Sans", sans-serif; fill: #c8cacc; }
    .max { display: grid; grid-template-columns: 1fr 1fr; height: 37px; align-content: center; row-gap: 5px; margin-top: auto; margin-bottom: 11px; background: linear-gradient(#16191a, #060707); border-radius: 3px; text-align: center; font-size: 7.900px; padding: 0 15px; box-sizing: border-box; }
</style>
<div class="tabs top"><span>VSTi</span><span class="tab">Meter</span></div>
<div class="panel">
    <div class="pick">Master</div>
    <div class="scale"><span>Digital Scale</span><span>-18 dBFS</span></div>
    <div class="btns"><span>AES17</span><span><svg width="10" height="6"><path d="M0 0h1v6H0zM5 0v6L1 3zM9.500 0v6L5.500 3z"/></svg></span></div>
    <svg class="vu" width="168" height="722" viewBox="2329.500 215 168 722">
        <defs><linearGradient id="level" x1="0" y1="0" x2="0" y2="1"><stop offset="0" stop-color="#33ff97"/><stop offset=".45" stop-color="#22e6d0"/><stop offset=".85" stop-color="#18d4fa"/><stop offset="1" stop-color="#15d0ff"/></linearGradient></defs>
        <rect x="2380" y="220" width="66" height="711.500" fill="#000" stroke="#5c6064" stroke-width="2"/>
        <rect x="2381.500" y="227" width="31.500" height="703" fill="url(#level)"/><rect x="2414" y="227" width="31" height="703" fill="url(#level)"/>
        <path d="M2381.500 376.500h31.500v553.500h-31.500zM2414 374.500h31v555.500h-31z" fill="#066" opacity=".05"/>
        <path d="M2381.500 376.500h31.500M2414 374.500h31" stroke="#0a4a4a"/>
        ${meterScale()}
    </svg>
    <div class="max"><span>RMS Max</span><span>Peak Max</span><span>-7.2</span><span>-0.3</span></div>
</div>
<div class="tabs bottom"><span class="tab">Master</span><span>Loudness</span></div>`);

// ---------- task bar ----------
const adobe = (t, bg, fg) => `<svg width="16" height="16" viewBox="0 0 16 16"><rect x=".75" y=".75" width="14.500" height="14.500" fill="${bg}" stroke="${fg}" stroke-width="1.500"/><text x="8" y="11.500" text-anchor="middle" font-size="9" font-weight="600" fill="${fg}">${t}</text></svg>`;
define('task-bar', `
<style>
    :host {
        display: flex; height: 29px; position: relative; align-items: stretch; font-size: 9.500px;
        background:
            radial-gradient(95px 60px at 1290px 14px, rgba(125,150,130,.65), transparent),
            linear-gradient(90deg, #64496d, #5c4565 200px, #46344d 350px, #3e2f43 450px, #3c2d42 1000px, #3d2e42 1600px, #3d2e44 2200px, #4a3455 2420px, #3c2b45);
    }
    .app { width: 29.700px; display: flex; align-items: center; justify-content: center; box-sizing: border-box; flex: none; }
    .start { width: 35px; background: #766080; }
    .active { background: #2b2730; width: 28px; border-bottom: 2px solid #a77ad8; }
    .running svg { margin-top: 2px; }
    .running { border-bottom: 2px solid #a77ad8; width: 23px; margin: 0 4px; }
    .tip { position: absolute; left: 0; top: -15px; height: 15px; padding: 0 4px; line-height: 13px; border: 1px solid #6a6a6c; background: #2b2b2c; font-size: 8.500px; z-index: 3; box-sizing: border-box; }
    .tray { margin-left: auto; display: flex; align-items: center; gap: 9px; padding-right: 8px; }
    .clock { display: flex; flex-direction: column; gap: 5px; text-align: center; font-size: 8.900px; }
</style>
<div class="tip">Start</div>
<div class="app start"><svg width="15" height="15" viewBox="0 0 15 15" fill="#fff"><path d="M0 2.200 6.500 1.300v5.700H0zM7.300 1.200 15 0v7H7.300zM0 7.900h6.500v5.800L0 12.800zM7.300 7.900H15V15l-7.700-1.100z"/></svg></div>
<div class="app" style="width:32px"><svg width="16" height="14" viewBox="0 0 16 14"><path d="M0 1h6l1.500 2H16v10H0z" fill="#e8b23c"/><path d="M0 4h16v9H0z" fill="#ffd668"/><path d="M2 14V8h12v6h-3.500v-3h-5v3z" fill="#3f96dc"/></svg></div>
<div class="app active">${cubase(18)}</div>
<div class="app" style="width:31px"><svg width="16" height="14" viewBox="0 0 16 14"><path d="M0 9.500 7 4H3V2.500h5L6.500 1l1.200-1L15 6z" fill="#ea8a1e"/><circle cx="10" cy="8.500" r="5" fill="#ea8a1e"/><circle cx="10" cy="8.500" r="3.300" fill="#fff"/><circle cx="10" cy="8.500" r="2" fill="#2b62a8"/></svg></div>
<div class="app" style="width:29px"><svg width="18" height="18" viewBox="0 0 18 18"><rect x=".75" y=".75" width="16.500" height="16.500" fill="#1a1819" stroke="#99959b" stroke-width="1.500"/><path d="M3 7v5M5 8v3" stroke="#c03a3a"/><path d="M7 6v5M9 8v5" stroke="#3b9a58"/><path d="M11 6v6" stroke="#3a6aa8"/><path d="M13 7v4M15 6v5" stroke="#c0582a"/></svg></div>
<div class="app">${adobe('Ae', '#1f0a40', '#c99cf5')}</div>
<div class="app">${adobe('Pr', '#2a0634', '#d673f0')}</div>
<div class="app"><svg width="16" height="16" viewBox="0 0 16 16"><rect x=".75" y=".75" width="14.500" height="14.500" fill="#120a40" stroke="#8f80ee" stroke-width="1.500"/><path d="M4 3.500 12.500 12.500H4z" fill="#a595f5"/><path d="m6 3 1 1M8.500 3v2M11 3v4M12.500 6v3" stroke="#a595f5"/></svg></div>
<div class="app">${adobe('Ps', '#001e26', '#1cc4f2')}</div>
<div class="app">${adobe('Lr', '#0a1e28', '#b4d4e6')}</div>
<div class="app"><svg width="17" height="17" viewBox="0 0 17 17"><path d="M8.500.8 16 3v5q-1 6-7.500 8.500Q2 14 1 8V3z" fill="#26180e" stroke="#f07c14" stroke-width="1.600"/><text x="8.500" y="12" font-size="10" font-weight="700" text-anchor="middle" fill="#f07c14">G</text></svg></div>
<div class="app running"><svg width="17" height="17" viewBox="0 0 17 17"><path fill-rule="evenodd" d="M8.500 0a8.500 8.500 0 1 0 0 17 8.500 8.500 0 0 0 0-17zm0 2.500c2.300 0 3.700 3 3.700 6s-1.400 6-3.700 6-3.700-3-3.700-6 1.400-6 3.700-6z" fill="#e8202e"/></svg></div>
<div class="app"><svg width="17" height="17" viewBox="0 0 17 17"><path d="M8.500 8.500 1.140 4.250A8.500 8.500 0 0 1 15.860 4.250z" fill="#e24435"/><path d="M8.500 8.500V17A8.500 8.500 0 0 1 1.140 4.250z" fill="#36a454"/><path d="M8.500 8.500l7.360-4.250A8.500 8.500 0 0 1 8.500 17z" fill="#f8ca3c"/><circle cx="8.500" cy="8.500" r="4" fill="#fff"/><circle cx="8.500" cy="8.500" r="3.100" fill="#4a86ec"/></svg></div>
<div class="tray">
    <svg width="12" height="11" viewBox="0 0 12 11" fill="none" stroke="#fff"><path d="M3 2.500h8.500v5H3zM5 10h5M7.500 7.500V10M.5.500h3v4h-3z"/></svg>
    <svg width="12" height="11" viewBox="0 0 12 11"><path d="M0 1h12v3H0z" fill="#2a1418"/><path d="M0 4h12v3H0z" fill="#e03a28"/><path d="M0 7h12v3H0z" fill="#f2c23c"/></svg>
    <svg width="10" height="10" viewBox="0 0 10 10" fill="none"><circle cx="5" cy="5" r="4" stroke="#eee" stroke-width="1.300"/><path d="M5 5 8 2" stroke="#f26a4a" stroke-width="1.600"/></svg>
    <svg width="9" height="12" viewBox="0 0 9 12" fill="none" stroke="#fff"><path d="M1.500 4.500h5v6h-5zM2.500 4V1h3v3M7 9.500l1.500 1.500"/></svg>
    <svg width="13" height="10" viewBox="0 0 13 10" fill="none" stroke="#fff"><path d="M.5 3.500h2L5 1v8L2.500 6.500h-2zM7 3.500q1 1.500 0 3M9 2q2 3 0 6M11 1q2.500 4 0 8"/></svg>
    <div class="clock"><span>1:25 PM</span><span>07-Dec-19</span></div>
</div>`);
</script>
</body>
</html>
